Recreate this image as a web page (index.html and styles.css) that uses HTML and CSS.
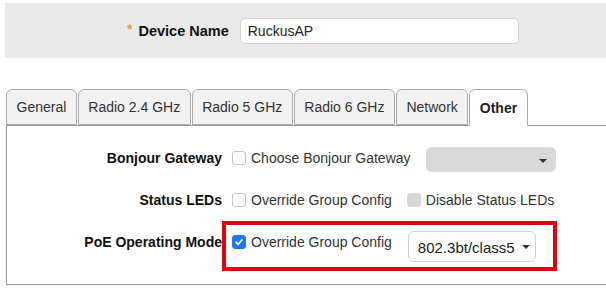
FILE: index.html
```html
<!DOCTYPE html>
<html lang="en">
<head>
  <meta charset="UTF-8" />
  <title>Device Settings</title>
  <link rel="stylesheet" href="styles.css">
</head>
<body>
  <div class="name-panel">
    <span class="required">*</span>
    <label class="name-label" for="device-name">Device Name</label>
    <input class="name-input" id="device-name" type="text" value="RuckusAP">
  </div>

  <div class="tabs">
    <div class="tab">General</div>
    <div class="tab">Radio 2.4 GHz</div>
    <div class="tab">Radio 5 GHz</div>
    <div class="tab">Radio 6 GHz</div>
    <div class="tab">Network</div>
    <div class="tab active">Other</div>
  </div>

  <div class="tab-body">
    <div class="row">
      <div class="row-label">Bonjour Gateway</div>
      <span class="check"></span>
      <span class="check-text">Choose Bonjour Gateway</span>
      <div class="select select-empty"><span class="caret"></span></div>
    </div>

    <div class="row">
      <div class="row-label">Status LEDs</div>
      <span class="check"></span>
      <span class="check-text">Override Group Config</span>
      <span class="check disabled"></span>
      <span class="check-text">Disable Status LEDs</span>
    </div>

    <div class="row">
      <div class="row-label">PoE Operating Mode</div>
      <span class="check checked">
        <svg width="10" height="10" viewBox="0 0 10 10"><path d="M2 5.2 L4.2 7.3 L8 2.9" fill="none" stroke="#fff" stroke-width="1.7" stroke-linecap="round" stroke-linejoin="round"/></svg>
      </span>
      <span class="check-text">Override Group Config</span>
      <div class="select select-value">802.3bt/class5<span class="caret"></span></div>
      <div class="highlight"></div>
    </div>
  </div>
</body>
</html>
```

FILE: styles.css
```css
body {
  margin: 0;
  background: #fff;
  font-family: "Liberation Sans", Arial, sans-serif;
  font-size: 14px;
  color: #222;
}
.name-panel {
  margin: 3px 0 0 5px;
  height: 55px;
  background: #e9e9e9;
  display: flex;
  align-items: center;
  padding-left: 122px;
}
.required {
  color: #f39a2c;
  font-size: 14px;
  font-weight: bold;
  margin-right: 6px;
  position: relative;
  top: -2px;
}
.name-label {
  font-weight: bold;
  font-size: 14.5px;
  color: #111;
}
.name-input {
  margin-left: 11px;
  width: 279px;
  height: 26px;
  box-sizing: border-box;
  border: 1px solid #d4d4d4;
  border-radius: 5px;
  padding: 0 7px;
  font-family: inherit;
  font-size: 14px;
  color: #222;
  background: #fff;
}
.tabs {
  display: flex;
  margin: 31px 0 0 6px;
  position: relative;
  z-index: 1;
}
.tab {
  height: 36px;
  box-sizing: border-box;
  padding: 0 9.5px;
  display: flex;
  align-items: center;
  background: #f2f2f2;
  border: 1px solid #ababab;
  border-radius: 6px 6px 0 0;
  margin-right: 1px;
  color: #333;
}
.tab.active {
  background: #fff;
  font-weight: bold;
  color: #222;
  border-bottom-color: #fff;
  height: 37px;
  margin-bottom: -1px;
}
.tab-body {
  margin-left: 6px;
  border: 1px solid #999;
  border-right: none;
  height: 160px;
  padding-top: 11px;
  box-sizing: border-box;
}
.row {
  position: relative;
  display: flex;
  align-items: center;
  height: 42px;
}
.row-label {
  width: 215px;
  text-align: right;
  font-weight: bold;
  color: #111;
  margin-right: 10px;
}
.check {
  width: 14px;
  height: 14px;
  box-sizing: border-box;
  border: 1px solid #c4c4c4;
  border-radius: 3px;
  background: #fff;
  display: flex;
  align-items: center;
  justify-content: center;
  margin-right: 5px;
}
.check.disabled {
  background: #d6d6d6;
  border-color: #d6d6d6;
}
.check.checked {
  background: #1d78ef;
  border-color: #1d78ef;
}
.check-text {
  color: #333;
  margin-right: 15px;
}
.select {
  position: relative;
  box-sizing: border-box;
  border-radius: 6px;
}
.select-empty {
  width: 130px;
  height: 25px;
  background: #d9d9d9;
  margin-top: 3px;
}
.select-value {
  width: 128px;
  height: 31px;
  border: 1px solid #d0d0d0;
  background: #fff;
  padding: 7px 0 0 9px;
  font-size: 15px;
  color: #222;
  margin-left: 1px;
  margin-top: 8px;
}
.select-value .caret {
  right: 5px;
}
.caret {
  position: absolute;
  right: 9px;
  top: 50%;
  margin-top: -1px;
  border-left: 4px solid transparent;
  border-right: 4px solid transparent;
  border-top: 4px solid #333;
}
.highlight {
  position: absolute;
  left: 215px;
  top: 0;
  width: 335px;
  height: 50px;
  box-sizing: border-box;
  border: 4px solid #e3000b;
}
```
